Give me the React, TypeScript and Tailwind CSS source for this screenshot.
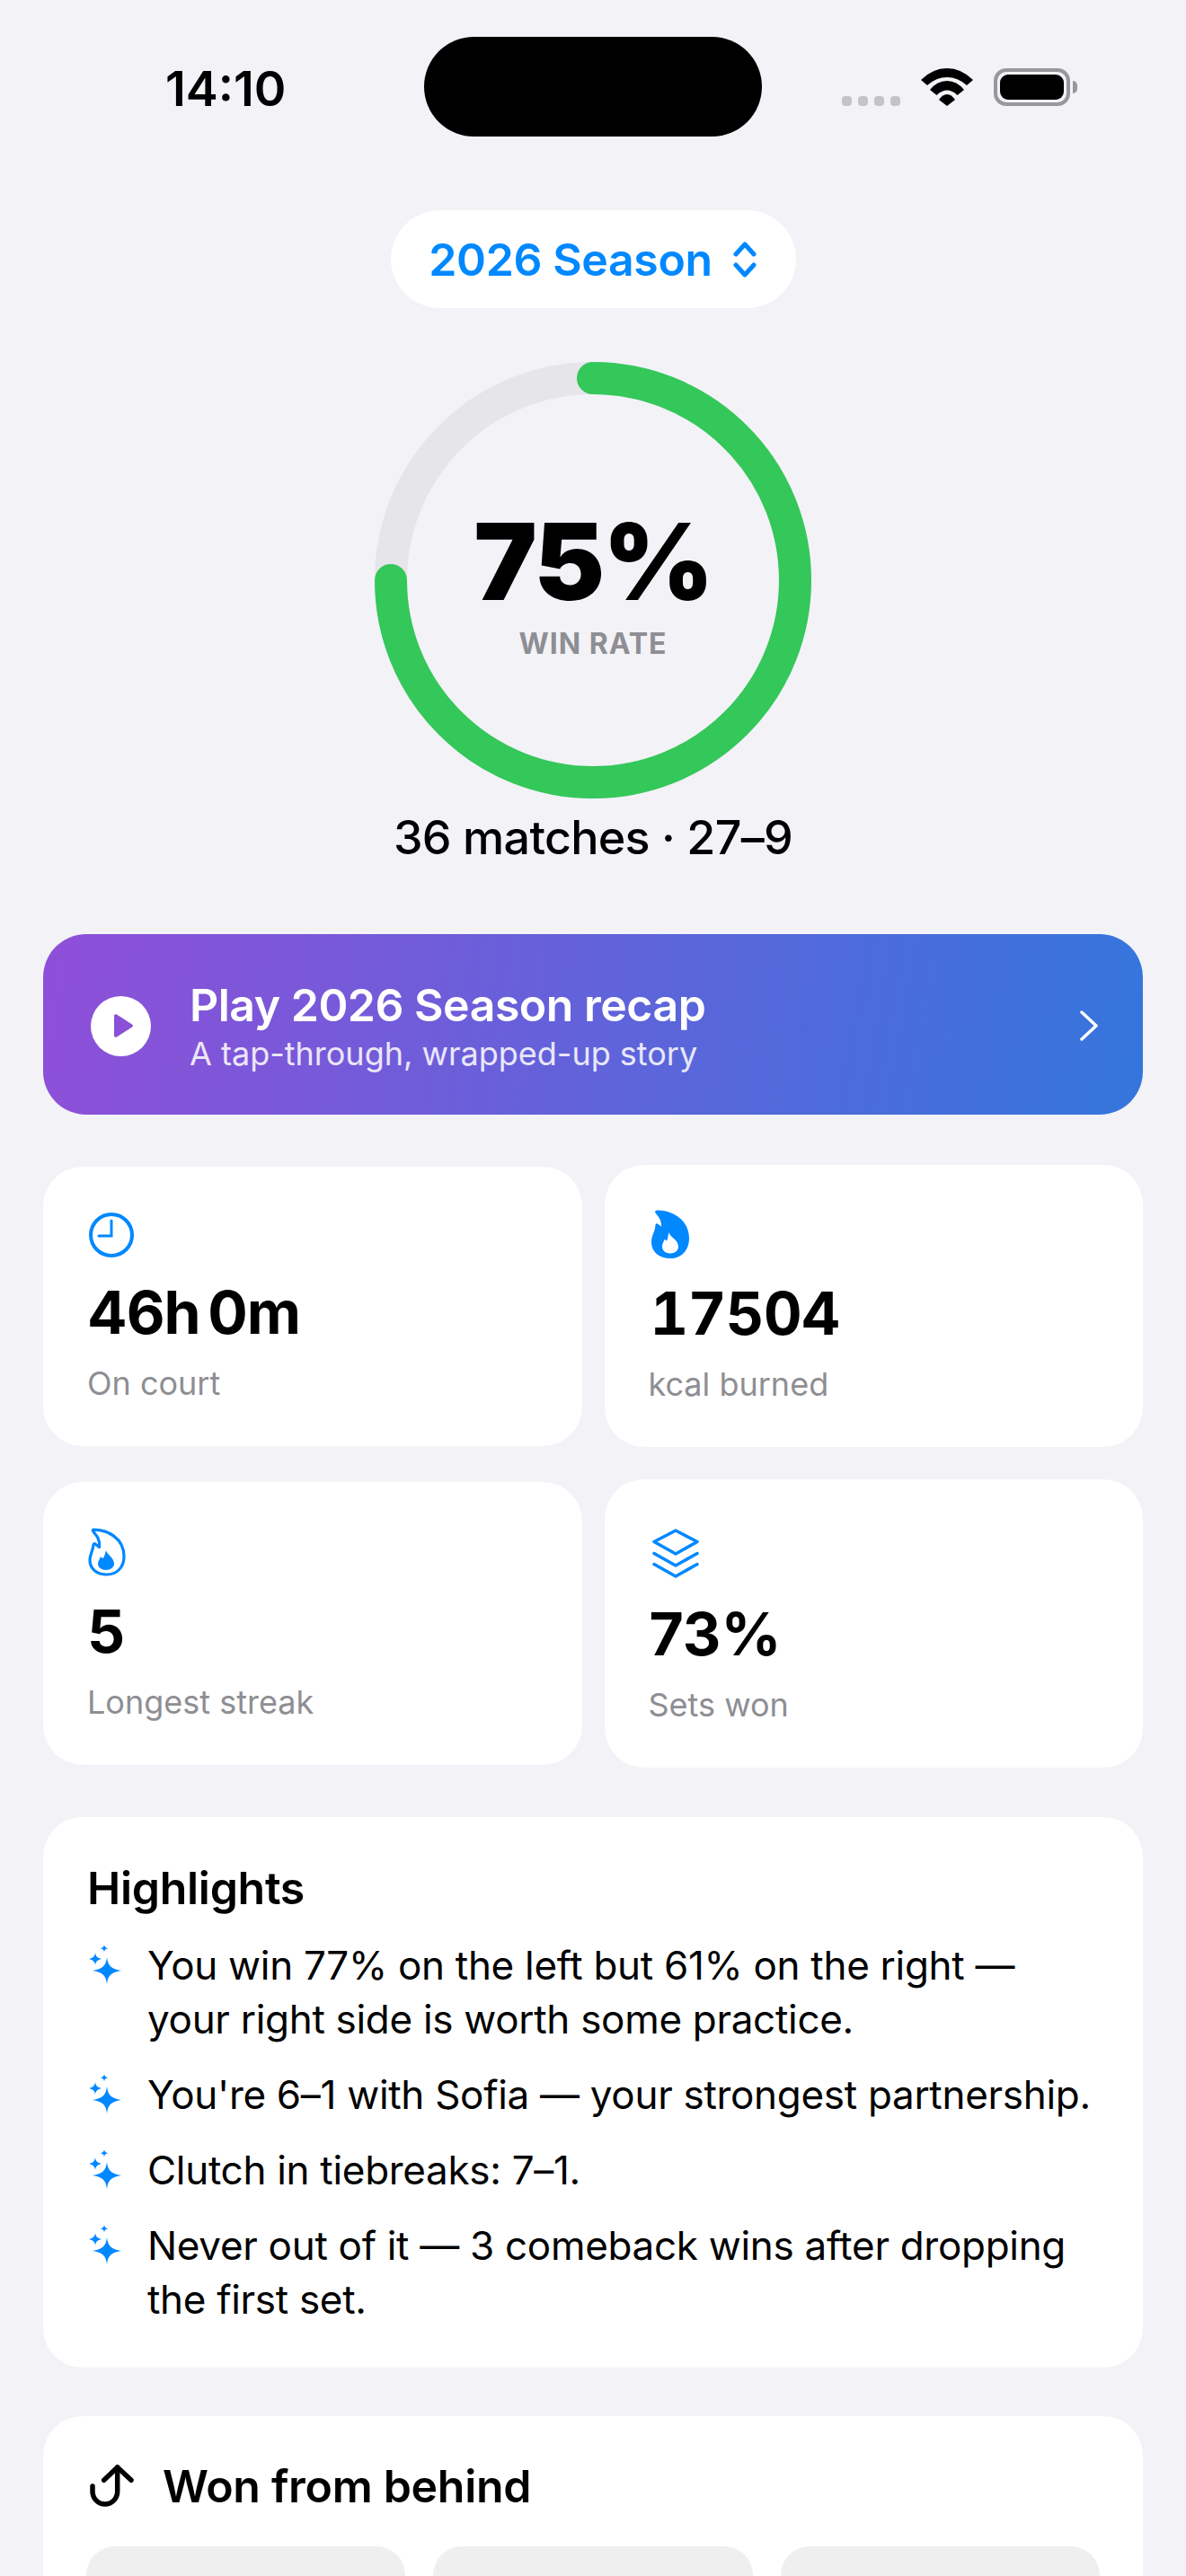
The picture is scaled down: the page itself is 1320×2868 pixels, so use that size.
import React from "react";

function StatusBar() {
  return (
    <div className="mt-[41px] flex h-[111px] items-center">
      <div className="w-[472px] pl-[184px] pt-[4px]">
        <span className="text-[54px] leading-none font-semibold text-black">14:10</span>
      </div>
      <div className="h-[111px] w-[376px] rounded-full bg-black" />
      <div className="flex items-end gap-[23px] pl-[89px]">
        <div className="flex gap-[7px]">
          <span className="h-[11px] w-[11px] rounded-[4px] bg-[#c4c4c8]" />
          <span className="h-[11px] w-[11px] rounded-[4px] bg-[#c4c4c8]" />
          <span className="h-[11px] w-[11px] rounded-[4px] bg-[#c4c4c8]" />
          <span className="h-[11px] w-[11px] rounded-[4px] bg-[#c4c4c8]" />
        </div>
        <svg width="58" height="42" viewBox="0 0 58 42" fill="black">
          <path d="M0 13Q13 0 29 0T58 13L51 19Q41 10 29 10T7 19z" />
          <path d="M10 24Q18 14 29 14T48 24L40.500 30Q35 24.500 29 24.500T17.500 30z" />
          <path d="M20 35Q24 29 29 29T38 35L29 42z" />
        </svg>
        <div className="flex items-center gap-[3px]">
          <div className="flex h-[42px] w-[85px] items-center justify-center rounded-[14px] border-[4px] border-[#98989c]">
            <div className="h-[28px] w-[71px] rounded-[9px] bg-black" />
          </div>
          <div className="h-[14px] w-[5px] rounded-r-full bg-[#98989c]" />
        </div>
      </div>
    </div>
  );
}

function WinRing() {
  return (
    <div className="relative mt-[60px] h-[486px] w-[486px]">
      <svg width="486" height="486" viewBox="0 0 486 486" fill="none">
        <circle cx="243" cy="243" r="225" stroke="#e5e5ea" strokeWidth="36" />
        <path d="M243 18A225 225 0 1 1 18 243" stroke="#34c759" strokeWidth="36" strokeLinecap="round" />
      </svg>
      <div className="absolute inset-0 flex flex-col items-center pt-[152px]">
        <span className="text-[118px] leading-[140px] font-black tracking-[-2px] text-black">75%</span>
        <span className="mt-[3px] text-[32px] leading-[38px] font-bold tracking-[1px] text-[#8e8e93]">WIN RATE</span>
      </div>
    </div>
  );
}

function StatCard({
  icon,
  value,
  label,
  iconHeight,
  valueClass,
}: {
  icon: React.ReactNode;
  value: string;
  label: string;
  iconHeight: string;
  valueClass?: string;
}) {
  return (
    <div className="flex flex-col rounded-[44px] bg-white px-[49px] pt-[51px] pb-[48px]">
      <div className={`flex items-end ${iconHeight}`}>{icon}</div>
      <div className={`mt-[21px] text-[66px] leading-[80px] font-bold text-black ${valueClass ?? ""}`}>{value}</div>
      <div className="mt-[17px] text-[36px] leading-[44px] text-[#8e8e93]">{label}</div>
    </div>
  );
}

const Clock = (
  <svg width="52" height="50" viewBox="0 0 52 50" fill="none" stroke="#0088ff" strokeWidth="4" strokeLinecap="round" className="ml-[1px]">
    <circle cx="26" cy="25" r="23" />
    <path d="M26 9v17H12" strokeWidth="3" />
  </svg>
);

const FlameFilled = (
  <svg width="42" height="54" viewBox="0 0 42 54" className="ml-[3px]">
    <path fill="#0088ff" d="M6 .5C22 0 42 10 42 32C42 45 33 54 21 54C9 54 0 47 0 36C0 28 4 25 4.500 17C4.700 15 6 15 7 15.500L11 18.500C11.500 12 8 8 5 4C3.500 2 4 .6 6 .5z" />
    <path fill="#fff" d="M19.500 25C20 30 30 33 30 41C30 45.500 26 48.500 21 48.500C16 48.500 12 45.500 12 41C12 37.500 14 35 14.500 32.500C15.500 33.500 16 34 17 34.500C18.500 32 18.500 28 19.500 25z" />
  </svg>
);

const FlameOutline = (
  <svg width="42" height="54" viewBox="0 0 42 54" className="ml-[1px]">
    <path fill="none" stroke="#0088ff" strokeWidth="3.200" strokeLinejoin="round" d="M6 2.200C21 2 40 11 40 32C40 44 32 52 21 52C10 52 2 46 2 36C2 29 5.500 26 6 19C6.200 17.500 7 17.500 8 18L12.500 21.500C13.500 13 9.500 8.500 6.500 5C5 3.200 5 2.300 6 2.200z" />
    <path fill="#0088ff" d="M20 25C21 30 29 33 29 40C29 44 25 47 20 47C15 47 11 44 11 40C11 36.500 13.500 34.500 14 32C15 33 15.500 33.500 16.500 34C18.500 32 19 28 20 25z" />
  </svg>
);

const Stack = (
  <svg width="52" height="56" viewBox="0 0 52 56" fill="none" stroke="#0088ff" strokeWidth="3.500" strokeLinejoin="round" strokeLinecap="round" className="ml-[4px]">
    <path d="M26 2 50 14.500 26 28 2 14.500z" />
    <path d="M2 27.500 26 41 50 27.500" />
    <path d="M2 39.500 26 53 50 39.500" />
  </svg>
);

function Sparkle() {
  return (
    <svg className="mt-[7px] ml-[2px] shrink-0" width="36" height="44" viewBox="0 0 36 44" fill="#0088ff">
      <path d="M20 14c1 9.500 5 13.500 16 15-11 1.500-15 5.500-16 15-1-9.500-5-13.500-16-15 11-1.500 15-5.500 16-15z" />
      <path d="M7 9c.5 4 2.500 6 7 7-4.500 1-6.500 3-7 7-.5-4-2.500-6-7-7 4.500-1 6.500-3 7-7z" />
      <path d="M17 0c.3 2.500 1.500 3.700 4.500 4.200-3 .5-4.200 1.700-4.500 4.300-.3-2.600-1.500-3.800-4.500-4.300 3-.5 4.200-1.700 4.500-4.200z" />
    </svg>
  );
}

function HighlightRow({ children }: { children: React.ReactNode }) {
  return (
    <div className="flex gap-[29px]">
      <Sparkle />
      <p className="text-[44px] leading-[60px] tracking-[-0.3px] text-black">{children}</p>
    </div>
  );
}

export default function App() {
  return (
    <div className="h-[2868px] w-[1320px] overflow-hidden bg-[#f2f2f7] font-['Inter',sans-serif]">
      <StatusBar />

      <div className="flex flex-col items-center">
        <div className="mt-[82px] flex h-[109px] w-[451px] items-center justify-center gap-[22px] rounded-full bg-white">
          <span className="text-[50px] leading-none font-semibold tracking-[-0.4px] text-[#0088ff]">2026 Season</span>
          <svg width="28" height="40" viewBox="0 0 28 40" fill="none" stroke="#0088ff" strokeWidth="5" strokeLinecap="round" strokeLinejoin="round">
            <path d="M4 14 14 3l10 11" />
            <path d="M4 26l10 11 10-11" />
          </svg>
        </div>
        <WinRing />
        <div className="mt-[12px] text-[52px] leading-[64px] font-medium tracking-[-0.7px] text-black">36 matches · 27–9</div>
      </div>

      <div className="mx-[48px] mt-[75px] flex h-[201px] items-center rounded-[48px] bg-linear-[100deg] from-[#8f4fd8] to-[#3476dc] pt-[3px] pr-[50px] pl-[53px]">
        <div className="flex h-[67px] w-[67px] shrink-0 items-center justify-center rounded-full bg-white">
          <svg width="24" height="28" viewBox="0 0 24 28" fill="#8a50d8" className="ml-[5px]">
            <path d="M2 3v22c0 1.500 1.500 2.300 3 1.500l17-11c1.300-.8 1.300-2.200 0-3l-17-11C3.500.6 2 1.500 2 3z" />
          </svg>
        </div>
        <div className="ml-[43px] flex-1">
          <div className="text-[50px] leading-[60px] font-semibold tracking-[-0.5px] text-white">Play 2026 Season recap</div>
          <div className="mt-[2px] text-[36px] leading-[44px] text-white/85">A tap-through, wrapped-up story</div>
        </div>
        <svg width="20" height="34" viewBox="0 0 20 34" fill="none" stroke="white" strokeWidth="3.500" strokeLinecap="round" strokeLinejoin="round">
          <path d="M2 2l16 15L2 32" />
        </svg>
      </div>

      <div className="mx-[48px] mt-[56px] grid grid-cols-2 items-center gap-x-[25px] gap-y-[36px]">
        <StatCard icon={Clock} iconHeight="h-[50px]" value="46h 0m" label="On court" valueClass="tracking-[-1px] [word-spacing:-6px]" />
        <StatCard icon={FlameFilled} iconHeight="h-[53px]" value="17504" label="kcal burned" valueClass="ml-[2px] tabular-nums tracking-[-0.5px]" />
        <StatCard icon={FlameOutline} iconHeight="h-[54px]" value="5" label="Longest streak" />
        <StatCard icon={Stack} iconHeight="h-[60px]" value="73%" label="Sets won" valueClass="ml-[1px]" />
      </div>

      <div className="mx-[48px] mt-[55px] rounded-[44px] bg-white px-[49px] pt-[49px] pb-[46px]">
        <div className="text-[50px] leading-[60px] font-semibold tracking-[-0.3px] text-black">Highlights</div>
        <div className="mt-[26px] flex flex-col gap-[24px]">
          <HighlightRow>You win 77% on the left but 61% on the right — your right side is worth some practice.</HighlightRow>
          <HighlightRow>You're 6–1 with Sofia — your strongest partnership.</HighlightRow>
          <HighlightRow>Clutch in tiebreaks: 7–1.</HighlightRow>
          <HighlightRow>Never out of it — 3 comeback wins after dropping the first set.</HighlightRow>
        </div>
      </div>

      <div className="mx-[48px] mt-[54px] rounded-[44px] bg-white px-[48px] pt-[48px] pb-[48px]">
        <div className="flex items-center gap-[30px]">
          <svg width="52" height="48" viewBox="0 0 52 48" fill="none" stroke="black" strokeWidth="5.500" strokeLinecap="round" strokeLinejoin="round" className="ml-[3px]">
            <path d="M4 24v6a14 14 0 0 0 13.850 14a14 14 0 0 0 13.850-14V3" />
            <path d="M16.700 17.300 31.700 3l15.300 14.300" />
          </svg>
          <span className="text-[50px] leading-[60px] font-semibold tracking-[-0.3px] text-black">Won from behind</span>
        </div>
        <div className="mt-[37px] grid grid-cols-3 gap-[31px]">
          <div className="h-[240px] rounded-[32px] bg-[#efefef]" />
          <div className="h-[240px] rounded-[32px] bg-[#efefef]" />
          <div className="h-[240px] rounded-[32px] bg-[#efefef]" />
        </div>
      </div>
    </div>
  );
}
